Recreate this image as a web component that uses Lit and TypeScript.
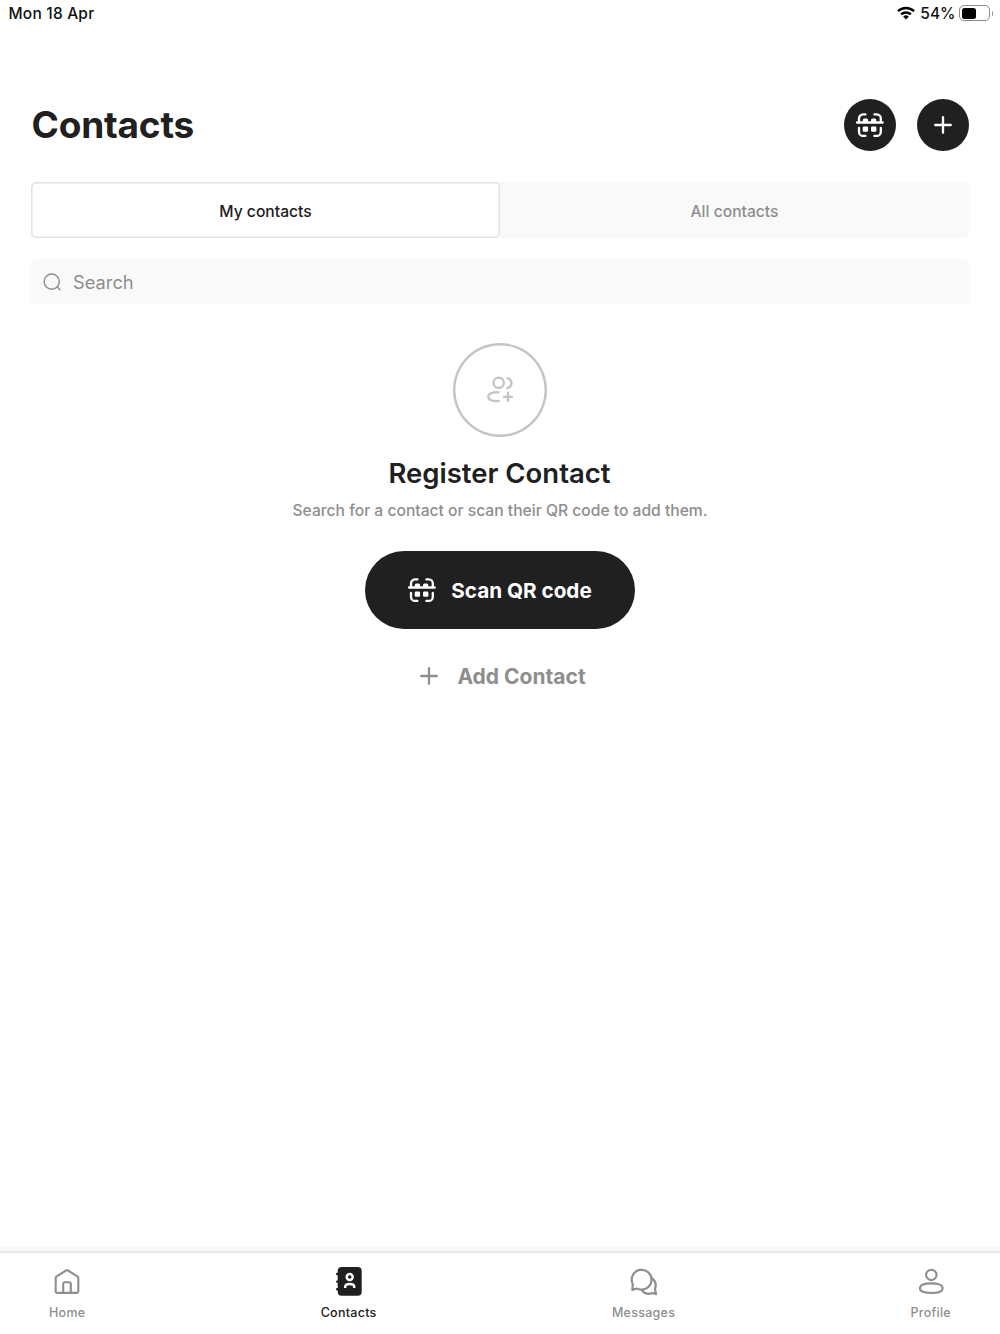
import {LitElement, html, css, svg} from "lit";
import {customElement, property, state} from "lit/decorators.js";
import {classMap} from "lit/directives/class-map.js";

const scanIcon = svg`
  <g fill="none" stroke="currentColor" stroke-width="2.3" stroke-linecap="round" stroke-linejoin="round">
    <path d="M3 10.5V7.4a4 4 0 0 1 4-4h2.4" />
    <path d="M18.4 3.4H20.8a4 4 0 0 1 4 4v3.1" />
    <path d="M3 17v3.9a4 4 0 0 0 4 4h2.4" />
    <path d="M18.4 24.9H20.8a4 4 0 0 0 4-4V17" />
    <path d="M1.1 11.5h25.6" />
  </g>
  <g fill="currentColor">
    <path d="M6.8 11.5V9.1a1.5 1.5 0 0 1 1.5-1.5h2.3a1.5 1.5 0 0 1 1.5 1.5v2.4z" />
    <path d="M15 11.5V9.1a1.5 1.5 0 0 1 1.5-1.5h2.3a1.5 1.5 0 0 1 1.5 1.5v2.4z" />
    <rect x="6.7" y="15.4" width="5.4" height="5.4" rx="1.3" />
    <rect x="15" y="15.4" width="5.4" height="5.4" rx="1.3" />
  </g>
`;

const plusIcon = svg`
  <path d="M14 6.2v15.6M6.2 14h15.6" fill="none" stroke="currentColor" stroke-width="2.3" stroke-linecap="round" />
`;

const searchIcon = svg`
  <g fill="none" stroke="currentColor" stroke-width="1.4" stroke-linecap="round">
    <circle cx="13.7" cy="13.6" r="7.6" />
    <path d="M19.2 19.1l2.7 2.7" />
  </g>
`;

const registerIcon = svg`
  <g fill="none" stroke="currentColor" stroke-width="2.3" stroke-linecap="round" stroke-linejoin="round">
    <circle cx="12.7" cy="6.8" r="5.2" />
    <path d="M21.4 2.3c5.4 1.4 5.4 8.4 0 9.800" />
    <path d="M12.6 16.300C6 16 2.300 17.700 2.300 20.700s3.700 4.700 10.300 4.300" />
    <path d="M22 16.700v8.200M17.900 20.800h8.200" />
  </g>
`;

const homeIcon = svg`
  <g fill="none" stroke="currentColor" stroke-width="2.1" stroke-linejoin="round">
    <path d="M2.7 10.9a1.8 1.8 0 0 1 .9-1.6L13 3.5a1.8 1.8 0 0 1 2 0l9.4 5.8a1.8 1.8 0 0 1 .9 1.6V24.3a1.6 1.6 0 0 1-1.600 1.600H4.300a1.600 1.600 0 0 1-1.600-1.600z" />
    <path d="M10.200 25.900V17a1.700 1.700 0 0 1 1.700-1.700h4.200a1.700 1.700 0 0 1 1.700 1.700v8.900" />
  </g>
`;

const contactsIcon = svg`
  <rect x="2.700" y="0" width="24" height="28.800" rx="4" fill="currentColor" />
  <path d="M2.200 7h2M2.200 14.600h2M2.200 22.300h2" fill="none" stroke="currentColor" stroke-width="2.400" stroke-linecap="round" />
  <g fill="none" stroke="#fff" stroke-width="2.400">
    <circle cx="14.700" cy="10" r="3" />
    <path d="M10.200 20.900v-1.200c0-1.800 1.600-2.700 4.500-2.700s4.500.9 4.500 2.700v1.200" />
  </g>
`;

const messagesIcon = svg`
  <g fill="none" stroke="currentColor" stroke-width="2.200" stroke-linecap="round" stroke-linejoin="round">
    <path d="M2.300 23.100l.5-5.900a9.900 9.900 0 1 1 4.700 4.500c-1.800-.4-3.300.6-5.200 1.400z" />
    <path d="M22.200 11.300c3.300 2.600 4.300 6.400 2.800 10.600l1 5.200c-1.900-.9-3.200-1.300-4.900-.7-3.600 1-6.800.1-9-3" />
  </g>
`;

const profileIcon = svg`
  <g fill="none" stroke="currentColor" stroke-width="2.100">
    <circle cx="14.300" cy="7.900" r="5.200" />
    <path d="M2.900 21.200c0-3.200 4.300-4.800 11.400-4.800s11.400 1.600 11.400 4.800-4.300 4.800-11.400 4.800-11.400-1.600-11.400-4.800z" />
  </g>
`;

@customElement("status-bar")
class StatusBar extends LitElement {
  @property({type: String}) date = "";
  @property({type: Number}) battery = 0;

  static styles = css`
    :host {
      display: flex;
      justify-content: space-between;
      align-items: center;
      height: 26px;
      padding: 0 7px 0 8.5px;
      color: #111;
      font-size: 15.5px;
      font-weight: 500;
    }
    .date {
      letter-spacing: 0.2px;
    }
    .right {
      display: flex;
      align-items: center;
    }
    .wifi {
      width: 18px;
      height: 14px;
      margin-right: 5.5px;
    }
    .level {
      margin-right: 3.5px;
    }
    .battery {
      box-sizing: border-box;
      width: 31px;
      height: 16px;
      padding: 1.5px;
      border: 1px solid #8a8a8a;
      border-radius: 5px;
    }
    .charge {
      height: 100%;
      border-radius: 2.5px;
      background: #000;
    }
    .tip {
      width: 1.5px;
      height: 5px;
      margin-left: 1.5px;
      border-radius: 0 2px 2px 0;
      background: #9a9a9a;
    }
  `;

  render() {
    return html`
      <span class="date">${this.date}</span>
      <div class="right">
        <svg class="wifi" viewBox="0 0 18 14">
          <g fill="none" stroke="#000" stroke-width="2.4">
            <path d="M1 5.2a11.5 11.5 0 0 1 16 0" />
            <path d="M4.1 8.4a7.1 7.1 0 0 1 9.8 0" />
          </g>
          <path d="M9 13.4L6.2 10.7a4 4 0 0 1 5.6 0z" />
        </svg>
        <span class="level">${this.battery}%</span>
        <div class="battery"><div class="charge" style="width: ${this.battery}%"></div></div>
        <div class="tip"></div>
      </div>
    `;
  }
}

@customElement("tab-bar")
class TabBar extends LitElement {
  @property({type: String}) active = "Contacts";

  items = [
    {label: "Home", icon: homeIcon},
    {label: "Contacts", icon: contactsIcon},
    {label: "Messages", icon: messagesIcon},
    {label: "Profile", icon: profileIcon},
  ];

  static styles = css`
    :host {
      box-sizing: border-box;
      display: flex;
      justify-content: space-between;
      height: 83px;
      padding: 14px 49px 0;
      border-top: 2px solid #e7e7e7;
      box-shadow: 0 -4px 0 #f8f8f8;
      background: #fff;
    }
    .item {
      display: flex;
      flex-direction: column;
      align-items: center;
      gap: 8px;
      padding: 0;
      border: none;
      background: none;
      color: #8e8e8e;
      font: 500 12.5px/18px Inter, sans-serif;
      letter-spacing: 0.27px;
    }
    .item.active {
      color: #202020;
    }
    svg {
      display: block;
      width: 28px;
      height: 29px;
    }
  `;

  render() {
    return this.items.map(
      (item) => html`
        <button class=${classMap({item: true, active: item.label === this.active})}>
          <svg viewBox="0 0 28 29">${item.icon}</svg>
          <span>${item.label}</span>
        </button>
      `
    );
  }
}

@customElement("app-root")
class AppRoot extends LitElement {
  @state() tab = "My contacts";

  static styles = css`
    :host {
      display: flex;
      flex-direction: column;
      height: 1334px;
      background: #fff;
      color: #202020;
      font-family: Inter, sans-serif;
    }
    button {
      padding: 0;
      border: none;
      background: none;
      color: inherit;
      font: inherit;
    }
    svg {
      display: block;
      width: 28px;
      height: 28px;
    }
    main {
      flex: 1;
      padding: 73px 31px 0;
    }
    header {
      display: flex;
      justify-content: space-between;
      align-items: center;
      height: 52px;
    }
    h1 {
      margin: 0;
      padding-left: 0.5px;
      font-size: 37px;
      font-weight: 700;
      line-height: 52px;
      letter-spacing: -0.2px;
    }
    .actions {
      display: flex;
      gap: 21px;
    }
    .round {
      display: flex;
      justify-content: center;
      align-items: center;
      width: 52px;
      height: 52px;
      border-radius: 50%;
      background: #202020;
      color: #fff;
    }
    .tabs {
      display: grid;
      grid-template-columns: 1fr 1fr;
      height: 56px;
      margin-top: 31px;
      border-radius: 5px;
      background: #f9f9f9;
    }
    .tab {
      padding-top: 2px;
      border-radius: 5px;
      color: #8e8e8e;
      font-size: 15.65px;
      font-weight: 500;
    }
    .tab.selected {
      background: #fff;
      box-shadow: inset 0 0 0 1.5px #e2e2e2;
      color: #202020;
    }
    .search {
      display: flex;
      align-items: center;
      gap: 7px;
      height: 45px;
      margin-top: 21px;
      padding-left: 7px;
      border-radius: 5px;
      background: #f9f9f9;
      color: #8e8e8e;
      font-size: 18.3px;
    }
    .empty {
      display: flex;
      flex-direction: column;
      align-items: center;
      margin-top: 39px;
    }
    .ring {
      display: flex;
      justify-content: center;
      align-items: center;
      width: 94px;
      height: 94px;
      border-radius: 50%;
      box-shadow: inset 0 0 0 2.4px #c4c4c4;
      color: #c4c4c4;
    }
    h2 {
      margin: 17px 1px 0 0;
      font-size: 27.5px;
      font-weight: 600;
      line-height: 38px;
    }
    .hint {
      margin: 9px 0 0;
      color: #8e8e8e;
      font-size: 15.65px;
      font-weight: 500;
      line-height: 20px;
    }
    .scan {
      display: flex;
      justify-content: center;
      align-items: center;
      gap: 15px;
      width: 270px;
      height: 78px;
      margin-top: 30px;
      border-radius: 39px;
      background: #202020;
      color: #fff;
      font-size: 20.7px;
      font-weight: 700;
    }
    .add {
      display: flex;
      align-items: center;
      gap: 14px;
      height: 30px;
      margin-top: 32px;
      padding-left: 1px;
      color: #8e8e8e;
      font-size: 21px;
      font-weight: 700;
    }
  `;

  render() {
    return html`
      <status-bar date="Mon 18 Apr" battery="54"></status-bar>
      <main>
        <header>
          <h1>Contacts</h1>
          <div class="actions">
            <button class="round" aria-label="Scan QR code">
              <svg viewBox="0 0 28 28">${scanIcon}</svg>
            </button>
            <button class="round" aria-label="Add Contact">
              <svg viewBox="0 0 28 28">${plusIcon}</svg>
            </button>
          </div>
        </header>
        <div class="tabs">
          ${["My contacts", "All contacts"].map(
            (name) => html`
              <button
                class=${classMap({tab: true, selected: name === this.tab})}
                @click=${() => (this.tab = name)}>
                ${name}
              </button>
            `
          )}
        </div>
        <div class="search">
          <svg viewBox="0 0 28 28">${searchIcon}</svg>
          <span>Search</span>
        </div>
        <section class="empty">
          <div class="ring"><svg viewBox="0 0 28 28">${registerIcon}</svg></div>
          <h2>Register Contact</h2>
          <p class="hint">Search for a contact or scan their QR code to add them.</p>
          <button class="scan">
            <svg viewBox="0 0 28 28">${scanIcon}</svg>
            <span>Scan QR code</span>
          </button>
          <button class="add">
            <svg viewBox="0 0 28 28">${plusIcon}</svg>
            <span>Add Contact</span>
          </button>
        </section>
      </main>
      <tab-bar active="Contacts"></tab-bar>
    `;
  }
}
